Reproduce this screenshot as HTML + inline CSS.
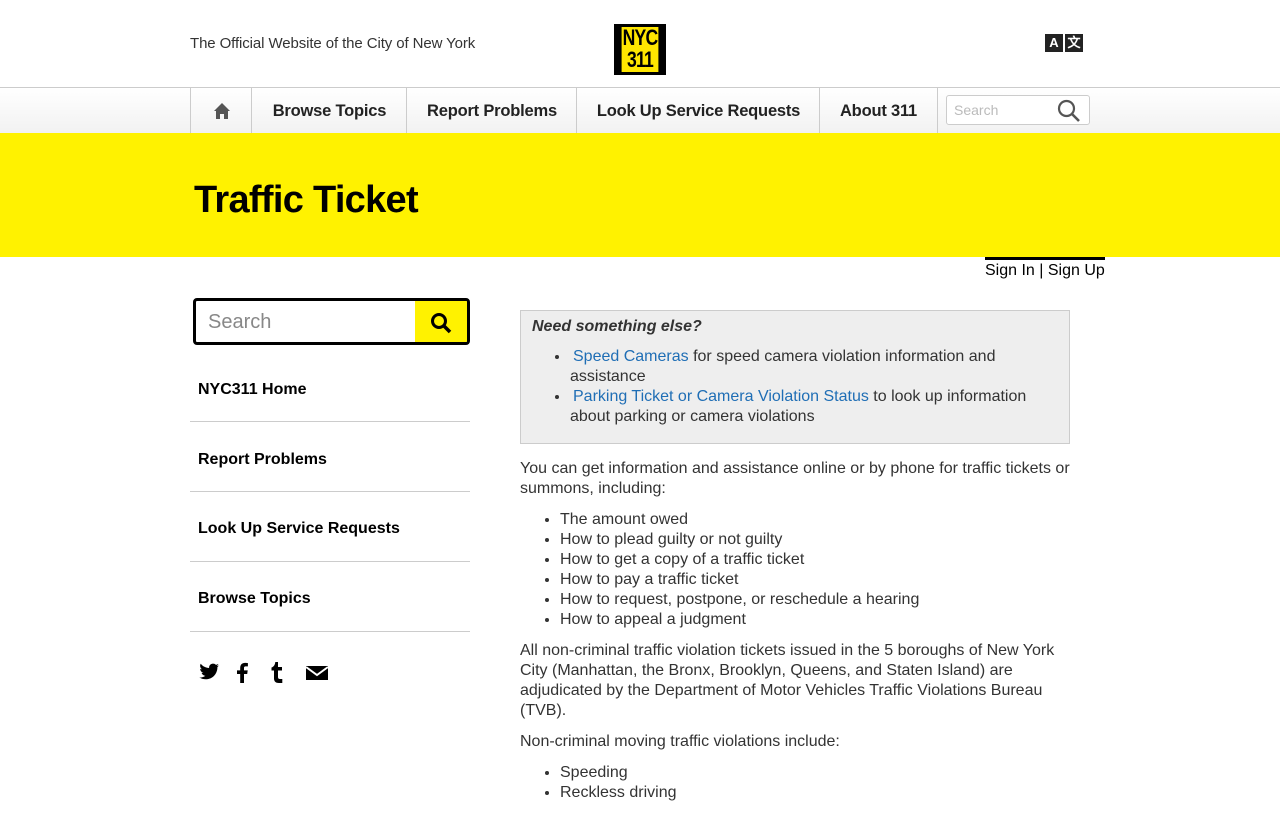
<!DOCTYPE html>
<html><head><meta charset="utf-8"><style>
*{box-sizing:border-box;margin:0;padding:0}
body{width:1280px;height:800px;overflow:hidden;background:#fff;font-family:"Liberation Sans",Arial,sans-serif;color:#333;position:relative}
.abs{position:absolute}
.tag{left:190px;top:35px;font-size:15px;color:#333;letter-spacing:-0.1px}
.logo{left:614px;top:24px;width:52px;height:51px;background:#000;padding:3px}
.logo div{background:#ffe600;width:100%;height:100%;font-weight:bold;color:#000;text-align:center;font-size:22px;line-height:22px;padding-top:0px;letter-spacing:-1px;transform:scaleX(.8)}
.trans{left:1045px;top:34px;display:flex;gap:2px}
.trans span{width:18px;height:18px;background:#222;color:#fff;font-weight:bold;font-size:13px;text-align:center;line-height:18px}
.nav{left:0;top:87px;width:1280px;height:46px;border-top:1px solid #ccc;background:linear-gradient(#fff,#f2f2f2)}
.nav .it{position:absolute;top:0;height:45px;border-left:1px solid #ccc;font-weight:bold;font-size:16.5px;color:#222;line-height:46px;text-align:center;letter-spacing:-0.2px}
.srch{left:946px;top:95px;width:144px;height:30px;border:1px solid #ccc;border-radius:3px;background:#fff;font-size:14px;color:#bbb;padding:6px 7px}
.band{left:0;top:133px;width:1280px;height:124px;background:#fff200}
.band h1{position:absolute;left:194px;top:46px;font-size:38px;color:#000;letter-spacing:-0.7px}
.sign{left:985px;top:257px;width:120px;border-top:3px solid #000;font-size:16px;color:#000;padding-top:2px}
.ls{left:193px;top:298px;width:277px;height:47px;border:3px solid #000;border-radius:4px;overflow:hidden}
.ls .t{position:absolute;left:12px;top:10px;font-size:20px;color:#888}
.ls .b{position:absolute;right:0;top:0;width:52px;height:41px;background:#fff200}
.side a{position:absolute;left:198px;font-weight:bold;font-size:16px;color:#000;text-decoration:none}
.hr{position:absolute;left:190px;width:280px;height:1px;background:#ccc}
.box{left:520px;top:310px;width:550px;height:134px;background:#eee;border:1px solid #ccc;padding:6px 11px;font-size:16px;line-height:20px}
.box ul{margin-left:38px;margin-top:10px}
.box a{color:#1f6eb5;text-decoration:none;margin-left:3px}
.main{left:520px;top:459px;width:555px;font-size:16px;line-height:20px}
.main p{margin-bottom:11px}
.main ul{margin-left:40px;margin-bottom:11px}
</style></head><body>
<div class="abs tag">The Official Website of the City of New York</div>
<div class="abs logo"><div>NYC<br>311</div></div>
<div class="abs trans"><span>A</span><span>文</span></div>
<div class="abs nav">
<div class="it" style="left:190px;width:62px"><svg width="18" height="18" viewBox="0 0 18 18" style="margin-top:14px"><path d="M9 1L1 9h2v8h4v-5h4v5h4V9h2z" fill="#555"/></svg></div>
<div class="it" style="left:251px;width:156px">Browse Topics</div>
<div class="it" style="left:406px;width:171px">Report Problems</div>
<div class="it" style="left:576px;width:244px">Look Up Service Requests</div>
<div class="it" style="left:819px;width:119px;border-right:1px solid #ccc">About 311</div>
</div>
<div class="abs srch">Search<svg class="abs" style="right:8px;top:3px" width="24" height="24" viewBox="0 0 24 24"><circle cx="9.5" cy="9.5" r="7.5" fill="none" stroke="#555" stroke-width="2.2"/><path d="M15 15l7 7" stroke="#555" stroke-width="2.6"/></svg></div>
<div class="abs band"><h1>Traffic Ticket</h1></div>
<div class="abs sign">Sign In | Sign Up</div>
<div class="abs ls"><span class="t">Search</span><div class="b"><svg style="position:absolute;left:15px;top:11px" width="22" height="22" viewBox="0 0 22 22"><circle cx="9" cy="9" r="6.5" fill="none" stroke="#000" stroke-width="3"/><path d="M14 14l6 6" stroke="#000" stroke-width="3.5"/></svg></div></div>
<div class="side">
<a style="top:381px">NYC311 Home</a><div class="hr" style="top:421px"></div>
<a style="top:451px">Report Problems</a><div class="hr" style="top:491px"></div>
<a style="top:520px">Look Up Service Requests</a><div class="hr" style="top:561px"></div>
<a style="top:590px">Browse Topics</a><div class="hr" style="top:631px"></div>
</div>
<svg class="abs" style="left:198px;top:660px" width="132" height="24" viewBox="0 0 132 24">
<path d="M21 5.5c-.7.3-1.5.5-2.3.6.8-.5 1.4-1.3 1.700-2.200-.8.5-1.600.8-2.500 1-1.600-1.700-4.400-1.600-5.900.1-.7.8-1 1.900-.9 3-3.300-.2-6.300-1.700-8.400-4.300-1.100 1.900-.5 4.300 1.300 5.500-.6 0-1.300-.2-1.800-.5 0 2 1.400 3.700 3.300 4.100-.6.2-1.200.2-1.900.1.5 1.700 2.100 2.800 3.800 2.900-1.700 1.300-3.800 2-6 1.700 1.900 1.200 4.100 1.800 6.300 1.800 7.600 0 11.900-6.400 11.700-12.300.8-.6 1.500-1.300 2-2.100z" fill="#000"/>
<path d="M46 23v-9h3.200l.5-3.600H46V8.200c0-1.100.3-1.800 1.900-1.800h2V3.100c-.4 0-1.500-.2-2.900-.2-2.900 0-4.800 1.700-4.800 5v2.500H39v3.600h3.200v9z" fill="#000"/>
<path d="M80 2v5h4v3.500h-4v6.500c0 1.500.8 2 2 2h2.300V23h-3.500c-3 0-4.800-1.600-4.800-4.500v-8h-2.500V7.500c2.200-.6 3.500-2.500 3.800-5.500z" fill="#000"/>
<path d="M108 6h22v14h-22z" fill="#000"/><path d="M108 7l11 8 11-8" fill="none" stroke="#fff" stroke-width="2"/>
</svg>
<div class="abs box"><b><i>Need something else?</i></b>
<ul><li><a>Speed Cameras</a> for speed camera violation information and assistance</li>
<li><a>Parking Ticket or Camera Violation Status</a> to look up information about parking or camera violations</li></ul></div>
<div class="abs main">
<p>You can get information and assistance online or by phone for traffic tickets or summons, including:</p>
<ul><li>The amount owed</li><li>How to plead guilty or not guilty</li><li>How to get a copy of a traffic ticket</li><li>How to pay a traffic ticket</li><li>How to request, postpone, or reschedule a hearing</li><li>How to appeal a judgment</li></ul>
<p>All non-criminal traffic violation tickets issued in the 5 boroughs of New York City (Manhattan, the Bronx, Brooklyn, Queens, and Staten Island) are adjudicated by the Department of Motor Vehicles Traffic Violations Bureau (TVB).</p>
<p>Non-criminal moving traffic violations include:</p>
<ul><li>Speeding</li><li>Reckless driving</li></ul>
</div>
</body></html>
